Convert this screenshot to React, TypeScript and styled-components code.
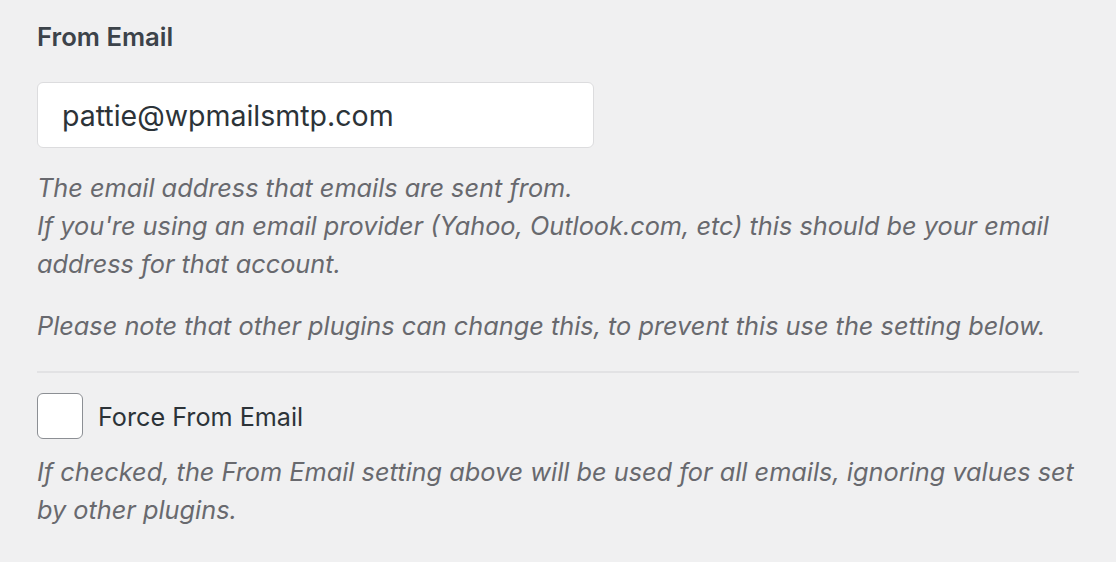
import React from "react";
import styled, { createGlobalStyle } from "styled-components";

const GlobalStyle = createGlobalStyle`
  html, body {
    margin: 0;
    padding: 0;
    background: #f0f0f1;
  }
  body {
    font-family: Inter, "Noto Sans", "Liberation Sans", sans-serif;
    -webkit-font-smoothing: antialiased;
  }
`;

const Page = styled.div`
  width: 1116px;
  height: 562px;
  box-sizing: border-box;
  padding: 22px 0 0 37px;
  background: #f0f0f1;
  overflow: hidden;
`;

const Section = styled.div`
  width: 1042px;
`;

const Label = styled.label`
  display: block;
  font-size: 25.7px;
  line-height: 30px;
  font-weight: 600;
  color: #3c434a;
  margin: 0 0 30px;
`;

const TextInput = styled.input`
  display: block;
  box-sizing: border-box;
  width: 557px;
  height: 66px;
  padding: 0 0 0 24px;
  border: 1px solid #dcdcde;
  border-radius: 6px;
  background: #ffffff;
  font-family: inherit;
  font-size: 28.5px;
  color: #2c3338;
  outline: none;
`;

const Description = styled.p<{ $gap?: number }>`
  margin: ${(p) => p.$gap ?? 0}px 0 0;
  font-size: 25.3px;
  line-height: 38px;
  font-style: italic;
  color: #68696e;
`;

const Divider = styled.hr`
  margin: 26px 0 0;
  border: none;
  border-top: 2px solid #e2e2e4;
`;

const CheckRow = styled.label`
  display: flex;
  align-items: center;
  gap: 15px;
  margin-top: 20px;
  cursor: pointer;
`;

const Box = styled.input`
  appearance: none;
  -webkit-appearance: none;
  margin: 0;
  width: 46px;
  height: 46px;
  box-sizing: border-box;
  border: 1.5px solid #8c8f94;
  border-radius: 6px;
  background: #ffffff;
`;

const CheckText = styled.span`
  font-size: 25.2px;
  line-height: 30px;
  color: #2c3338;
  padding-top: 2px;
`;

export default function App() {
  return (
    <>
      <GlobalStyle />
      <Page>
        <Section>
          <Label htmlFor="from-email">From Email</Label>
          <TextInput id="from-email" type="email" defaultValue="pattie@wpmailsmtp.com" />
          <Description $gap={21}>
            The email address that emails are sent from.
            <br />
            If you're using an email provider (Yahoo, Outlook.com, etc) this should be your email address for that account.
          </Description>
          <Description $gap={24}>
            Please note that other plugins can change this, to prevent this use the setting below.
          </Description>
          <Divider />
          <CheckRow>
            <Box type="checkbox" />
            <CheckText>Force From Email</CheckText>
          </CheckRow>
          <Description $gap={14}>
            If checked, the From Email setting above will be used for all emails, ignoring values set by other plugins.
          </Description>
        </Section>
      </Page>
    </>
  );
}
